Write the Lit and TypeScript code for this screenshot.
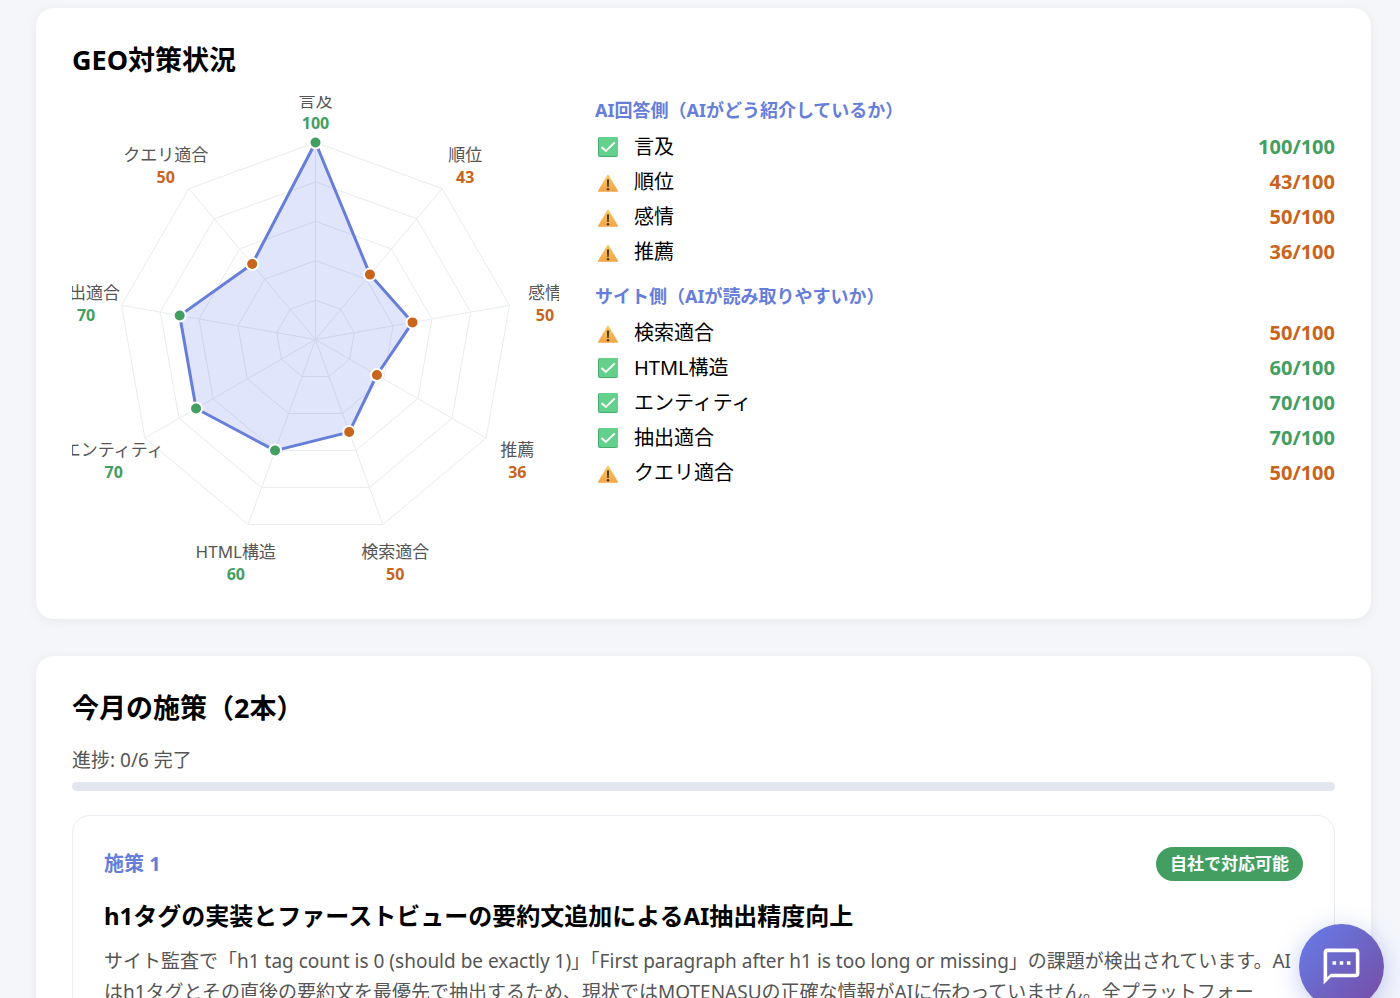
import { LitElement, html, svg, css } from "lit";
import { customElement } from "lit/decorators.js";
import { classMap } from "lit/directives/class-map.js";

interface Metric {
  name: string;
  score: number;
}

const ANSWER_SIDE: Metric[] = [
  { name: "言及", score: 100 },
  { name: "順位", score: 43 },
  { name: "感情", score: 50 },
  { name: "推薦", score: 36 },
];

const SITE_SIDE: Metric[] = [
  { name: "検索適合", score: 50 },
  { name: "HTML構造", score: 60 },
  { name: "エンティティ", score: 70 },
  { name: "抽出適合", score: 70 },
  { name: "クエリ適合", score: 50 },
];

const isGood = (score: number) => score >= 60;

@customElement("geo-radar")
export class GeoRadar extends LitElement {
  static styles = css`
    :host {
      display: block;
    }
    .chart {
      display: block;
      width: 100%;
      overflow: hidden;
    }
    .grid {
      fill: none;
      stroke: #e8ecef;
      stroke-width: 1;
    }
    .area {
      fill: rgba(102, 126, 234, 0.2);
      stroke: #667eda;
      stroke-width: 3;
      stroke-linejoin: round;
    }
    .dot {
      stroke: #fff;
      stroke-width: 2;
      fill: #c8641b;
    }
    .name {
      font-size: 17px;
      fill: #555;
      text-anchor: middle;
    }
    .value {
      font-size: 16px;
      font-weight: 700;
      fill: #c8641b;
      text-anchor: middle;
    }
    .good {
      fill: #439e62;
    }
  `;

  private readonly metrics = [...ANSWER_SIDE, ...SITE_SIDE];
  private readonly size = 487;
  private readonly center = this.size / 2;
  private readonly radius = 197;

  private point(index: number, distance: number) {
    const angle = (index / this.metrics.length) * Math.PI * 2;
    return {
      x: this.center + distance * Math.sin(angle),
      y: this.center - distance * Math.cos(angle),
    };
  }

  private outline(distance: (index: number) => number) {
    return this.metrics
      .map((_, i) => this.point(i, distance(i)))
      .map((p) => `${p.x.toFixed(1)},${p.y.toFixed(1)}`)
      .join(" ");
  }

  render() {
    const rings = [0.2, 0.4, 0.6, 0.8, 1];
    return html`
      <svg class="chart" viewBox="0 0 ${this.size} ${this.size}" role="img" aria-label="GEO対策状況">
        ${rings.map((f) => svg`<polygon class="grid" points=${this.outline(() => this.radius * f)} />`)}
        ${this.metrics.map((_, i) => {
          const p = this.point(i, this.radius);
          return svg`<line class="grid" x1=${this.center} y1=${this.center} x2=${p.x} y2=${p.y} />`;
        })}
        <polygon
          class="area"
          points=${this.outline((i) => (this.radius * this.metrics[i].score) / 100)}
        />
        ${this.metrics.map((m, i) => {
          const p = this.point(i, (this.radius * m.score) / 100);
          const l = this.point(i, 233);
          const good = isGood(m.score);
          return svg`
            <circle class=${classMap({ dot: true, good })} cx=${p.x} cy=${p.y} r="6" />
            <text class="name" x=${l.x} y=${l.y}>${m.name}</text>
            <text class=${classMap({ value: true, good })} x=${l.x} y=${l.y + 22}>${m.score}</text>
          `;
        })}
      </svg>
    `;
  }
}

@customElement("metric-group")
export class MetricGroup extends LitElement {
  static properties = {
    heading: {},
    metrics: { attribute: false },
  };

  declare heading: string;
  declare metrics: Metric[];

  static styles = css`
    :host {
      display: block;
    }
    .heading {
      margin: 0 0 5px;
      font-size: 18px;
      line-height: 28px;
      font-weight: 700;
      color: #667eda;
    }
    .list {
      margin: 0;
      padding: 0;
      list-style: none;
    }
    .row {
      display: flex;
      align-items: center;
      gap: 13px;
      font-size: 20px;
      line-height: 35px;
    }
    .icon {
      flex: none;
      width: 26px;
      height: 22px;
    }
    .name {
      flex: 1;
    }
    .score {
      font-weight: 700;
      color: #c8641b;
    }
    .score.good {
      color: #439e62;
    }
  `;

  private icon(good: boolean) {
    return good
      ? html`<svg class="icon" viewBox="0 0 26 22" aria-hidden="true">
          <rect x="3" y="1" width="20" height="20" rx="2" fill="#46ad70" />
          <rect x="4" y="1" width="19" height="19" rx="1.5" fill="#63d08c" />
          <path d="M6.500 11l4.300 4 9-8.600" fill="none" stroke="#fff" stroke-width="2" />
        </svg>`
      : html`<svg class="icon" viewBox="0 0 26 22" aria-hidden="true">
          <defs>
            <linearGradient id="amber" x1="0" y1="0" x2="0" y2="1">
              <stop offset="0" stop-color="#fbc95f" />
              <stop offset="1" stop-color="#f2a447" />
            </linearGradient>
          </defs>
          <path
            d="M12.400 4q.6-.9 1.200 0L23 19.800q.4 1-.6 1H3.600q-1 0-.6-1z"
            fill="url(#amber)"
          />
          <path d="M11.900 8.500h2.200l-.4 7.500h-1.400z" fill="#4a3722" />
          <circle cx="13" cy="18.200" r="1.200" fill="#4a3722" />
        </svg>`;
  }

  render() {
    return html`
      <h3 class="heading">${this.heading}</h3>
      <ul class="list">
        ${this.metrics.map((m) => {
          const good = isGood(m.score);
          return html`<li class="row">
            ${this.icon(good)}
            <span class="name">${m.name}</span>
            <span class=${classMap({ score: true, good })}>${m.score}/100</span>
          </li>`;
        })}
      </ul>
    `;
  }
}

@customElement("app-root")
export class AppRoot extends LitElement {
  static styles = css`
    :host {
      display: block;
      box-sizing: border-box;
      height: 100vh;
      overflow: hidden;
      padding: 8px 29px 0 36px;
      background: #f4f6fa;
      color: #000;
      font-family: "Noto Sans", "Noto Sans CJK JP", sans-serif;
    }
    .page {
      display: flex;
      flex-direction: column;
      gap: 37px;
    }
    .card {
      padding: 36px;
      border-radius: 18px;
      background: #fff;
      box-shadow: 0 2px 12px rgba(0, 0, 0, 0.06);
    }
    .title {
      margin: 0 0 20px;
      font-size: 27px;
      line-height: 32px;
      font-weight: 700;
    }
    .status {
      display: grid;
      grid-template-columns: 487px 1fr;
      gap: 36px;
      align-items: start;
    }
    .groups {
      display: flex;
      flex-direction: column;
      gap: 13px;
    }
    .progress-text {
      margin: 0 0 6px;
      font-size: 19px;
      line-height: 32px;
      color: #555;
    }
    .track {
      height: 9px;
      margin-bottom: 24px;
      border-radius: 5px;
      background: #e2e6ee;
    }
    .measure {
      padding: 31px;
      border: 1px solid #e9ecf0;
      border-radius: 18px;
    }
    .measure-head {
      display: flex;
      align-items: center;
      justify-content: space-between;
      margin-bottom: 17px;
    }
    .measure-no {
      font-size: 20px;
      line-height: 34px;
      font-weight: 700;
      color: #667eda;
    }
    .badge {
      padding: 0 14px;
      border-radius: 17px;
      background: #439e62;
      color: #fff;
      font-size: 17px;
      line-height: 34px;
      font-weight: 700;
    }
    .measure-title {
      margin: 0 0 12px;
      font-size: 24px;
      line-height: 36px;
      font-weight: 700;
    }
    .measure-text {
      margin: 0;
      font-size: 19px;
      line-height: 31px;
      color: #555;
    }
    .chat {
      position: fixed;
      right: 16px;
      bottom: -11px;
      display: grid;
      place-items: center;
      width: 85px;
      height: 85px;
      padding: 0;
      border: 0;
      border-radius: 50%;
      background: linear-gradient(135deg, #667eea, #764ba2);
      box-shadow: 0 5px 24px rgba(102, 126, 234, 0.4);
      cursor: pointer;
    }
    .chat-icon {
      width: 43px;
      height: 43px;
      fill: #fff;
    }
  `;

  render() {
    return html`
      <main class="page">
        <section class="card">
          <h2 class="title">GEO対策状況</h2>
          <div class="status">
            <geo-radar></geo-radar>
            <div class="groups">
              <metric-group
                .heading=${"AI回答側（AIがどう紹介しているか）"}
                .metrics=${ANSWER_SIDE}
              ></metric-group>
              <metric-group
                .heading=${"サイト側（AIが読み取りやすいか）"}
                .metrics=${SITE_SIDE}
              ></metric-group>
            </div>
          </div>
        </section>

        <section class="card">
          <h2 class="title">今月の施策（2本）</h2>
          <p class="progress-text">進捗: 0/6 完了</p>
          <div
            class="track"
            role="progressbar"
            aria-label="進捗"
            aria-valuemin="0"
            aria-valuemax="6"
            aria-valuenow="0"
          ></div>
          <article class="measure">
            <div class="measure-head">
              <span class="measure-no">施策 1</span>
              <span class="badge">自社で対応可能</span>
            </div>
            <h3 class="measure-title">h1タグの実装とファーストビューの要約文追加によるAI抽出精度向上</h3>
            <p class="measure-text">サイト監査で「h1 tag count is 0 (should be exactly 1)」「First paragraph after h1 is too long or missing」の課題が検出されています。AIはh1タグとその直後の要約文を最優先で抽出するため、現状ではMOTENASUの正確な情報がAIに伝わっていません。全プラットフォー</p>
          </article>
        </section>
      </main>
      <button class="chat" type="button" aria-label="チャット">
        <svg class="chat-icon" viewBox="0 0 24 24" aria-hidden="true">
          <path
            d="M20 2H4c-1.100 0-2 .9-2 2v18l4-4h14c1.100 0 2-.9 2-2V4c0-1.100-.9-2-2-2zm0 14H6l-2 2V4h16v12zM7 9h2v2H7zm4 0h2v2h-2zm4 0h2v2h-2z"
          />
        </svg>
      </button>
    `;
  }
}
